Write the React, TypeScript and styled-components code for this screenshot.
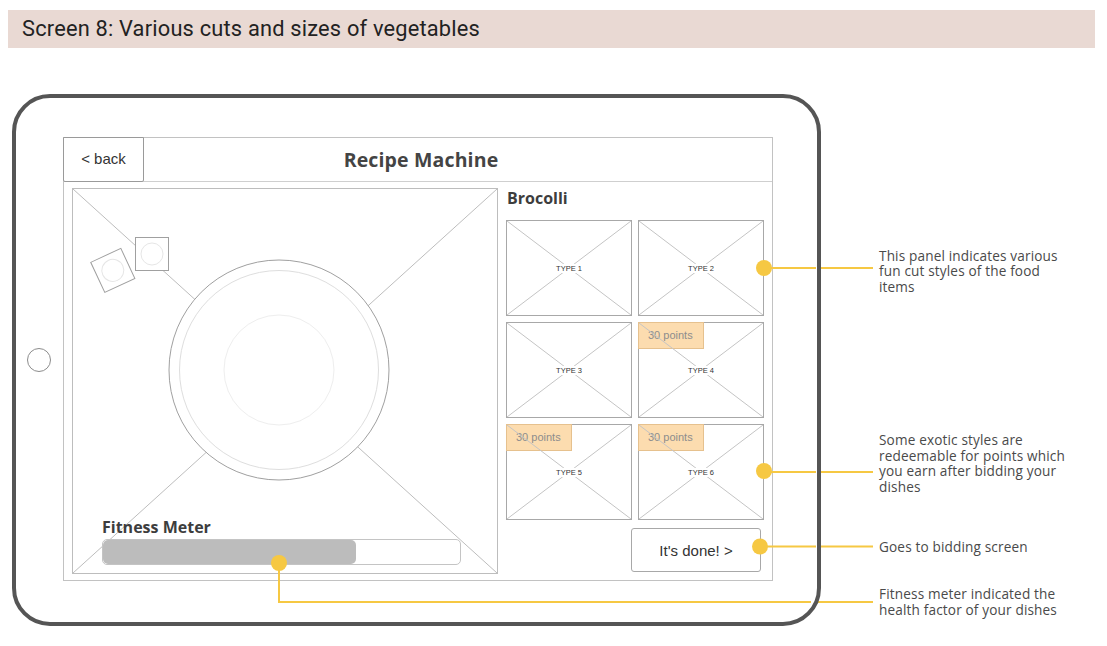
import React from "react";
import styled, { createGlobalStyle } from "styled-components";

const GlobalStyle = createGlobalStyle`
  html, body { margin: 0; padding: 0; background: #ffffff; }
  body { font-family: "Open Sans", "Liberation Sans", sans-serif; color: #444; }
  * { box-sizing: border-box; }
`;

const Page = styled.div`
  position: relative;
  width: 1107px;
  height: 646px;
  overflow: hidden;
`;

const Banner = styled.div`
  margin: 10px 12px 0 8px;
  height: 38px;
  background: #e9d9d3;
  padding-left: 14px;
  font-family: Roboto, "Liberation Sans", sans-serif;
  font-size: 21.8px;
  line-height: 38px;
  letter-spacing: 0.2px;
  color: #222;
`;

const Stage = styled.div`
  display: flex;
  margin-top: 46px;
  padding-left: 12px;
`;

const Tablet = styled.div`
  position: relative;
  z-index: 2;
  width: 809px;
  height: 532px;
  border: 4px solid #555;
  border-radius: 38px;
  display: flex;
  align-items: center;
  gap: 12px;
  padding: 0 0 0 11px;
  flex-shrink: 0;
`;

const HomeButton = styled.div`
  width: 24px;
  height: 24px;
  border: 1.5px solid #8c8c8c;
  border-radius: 50%;
`;

const Screen = styled.div`
  width: 710px;
  height: 444px;
  margin-top: -2px;
  border: 1px solid #c2c2c2;
  display: flex;
  flex-direction: column;
`;

const TopBar = styled.div`
  position: relative;
  height: 44px;
  border-bottom: 1px solid #cfcfcf;
  display: flex;
  align-items: stretch;
  flex-shrink: 0;
`;

const BackButton = styled.div`
  width: 81px;
  margin: -1px 0 -1px -1px;
  border: 1px solid #9a9a9a;
  border-radius: 0 0 2px 2px;
  background: #fff;
  display: flex;
  align-items: center;
  justify-content: center;
  font-family: "Liberation Sans", Arial, sans-serif;
  font-size: 15px;
  color: #333;
  padding-bottom: 2px;
`;

const Title = styled.div`
  position: absolute;
  left: 0;
  right: 0;
  top: 0;
  text-align: center;
  font-weight: 700;
  font-size: 19.5px;
  line-height: 43px;
  letter-spacing: 0.15px;
  color: #444;
  pointer-events: none;
  padding-left: 6px;
`;

const Body = styled.div`
  flex: 1;
  display: flex;
  gap: 8px;
  padding: 6px 8px;
`;

const ImagePanel = styled.div`
  position: relative;
  width: 426px;
  height: 386px;
  border: 1px solid #bdbdbd;
  display: flex;
  flex-direction: column;
  justify-content: flex-end;
  padding: 0 0 8px 29px;
`;

const PanelArt = styled.svg`
  position: absolute;
  inset: 0;
  width: 100%;
  height: 100%;
`;

const Meter = styled.div`
  position: relative;
  display: flex;
  flex-direction: column;
  gap: 3px;
`;

const MeterLabel = styled.div`
  font-weight: 700;
  font-size: 16px;
  line-height: 18px;
  color: #3d3d3d;
`;

const MeterTrack = styled.div`
  width: 359px;
  height: 26px;
  border: 1px solid #c4c4c4;
  border-radius: 5px;
  background: #fff;
  overflow: hidden;
`;

const MeterFill = styled.div`
  height: 100%;
  background: #bcbcbc;
  border-radius: 5px;
`;

const SidePanel = styled.div`
  width: 258px;
  display: flex;
  flex-direction: column;
`;

const ItemTitle = styled.div`
  font-weight: 700;
  font-size: 16px;
  line-height: 20px;
  color: #3d3d3d;
  padding-left: 1px;
`;

const TileGrid = styled.div`
  margin-top: 12px;
  display: grid;
  grid-template-columns: 126px 126px;
  grid-auto-rows: 96px;
  column-gap: 6px;
  row-gap: 6px;
`;

const Tile = styled.div`
  position: relative;
  border: 1px solid #a8a8a8;
  background: #fff;
  display: flex;
  align-items: center;
  justify-content: center;
`;

const TileArt = styled.svg`
  position: absolute;
  inset: 0;
  width: 100%;
  height: 100%;
`;

const TileLabel = styled.span`
  position: relative;
  background: #fff;
  padding: 0 1px;
  font-family: "Liberation Sans", Arial, sans-serif;
  font-size: 7.5px;
  color: #333;
`;

const PointsBadge = styled.div`
  position: absolute;
  top: -1px;
  left: -1px;
  width: 66px;
  height: 27px;
  background: #fcdcaf;
  border: 1px solid #e6c18e;
  padding-left: 9px;
  font-family: "Liberation Sans", Arial, sans-serif;
  font-size: 11px;
  line-height: 25px;
  color: #8d8d8d;
`;

const DoneRow = styled.div`
  display: flex;
  justify-content: flex-end;
  margin-top: 8px;
  padding-right: 3px;
`;

const DoneButton = styled.div`
  width: 130px;
  height: 44px;
  border: 1px solid #a8a8a8;
  border-radius: 3px;
  display: flex;
  align-items: center;
  justify-content: center;
  font-family: "Liberation Sans", Arial, sans-serif;
  font-size: 15px;
  color: #333;
`;

const Notes = styled.div`
  display: flex;
  flex-direction: column;
  margin-left: 58px;
  width: 196px;
`;

const Note = styled.p<{ $gap: number }>`
  margin: ${(p) => p.$gap}px 0 0 0;
  font-size: 13.6px;
  line-height: 15.5px;
  color: #4a4a4a;
  letter-spacing: 0.15px;
`;

const Callouts = styled.svg`
  position: absolute;
  left: 0;
  top: 0;
  width: 1107px;
  height: 646px;
  pointer-events: none;
  z-index: 1;
`;

const CalloutDots = styled.svg`
  position: absolute;
  left: 0;
  top: 0;
  width: 1107px;
  height: 646px;
  pointer-events: none;
  z-index: 3;
`;

const tiles = [
  { label: "TYPE 1", points: false },
  { label: "TYPE 2", points: false },
  { label: "TYPE 3", points: false },
  { label: "TYPE 4", points: true },
  { label: "TYPE 5", points: true },
  { label: "TYPE 6", points: true },
];

const YELLOW = "#f6c843";

export default function App() {
  const fitness = 254 / 359;
  return (
    <Page>
      <GlobalStyle />
      <Banner>Screen 8: Various cuts and sizes of vegetables</Banner>
      <Callouts viewBox="0 0 1107 646">
        <g stroke={YELLOW} strokeWidth="2" fill="none">
          <line x1="820" y1="268" x2="873" y2="268" />
          <line x1="820" y1="472" x2="873" y2="472" />
          <line x1="820" y1="546.5" x2="873" y2="546.5" />
          <line x1="815" y1="602" x2="873" y2="602" />
        </g>
      </Callouts>
      <Stage>
        <Tablet>
          <HomeButton />
          <Screen>
            <TopBar>
              <BackButton>&lt; back</BackButton>
              <Title>Recipe Machine</Title>
            </TopBar>
            <Body>
              <ImagePanel>
                <PanelArt viewBox="0 0 424 384" preserveAspectRatio="none">
                  <line x1="0" y1="0" x2="424" y2="384" stroke="#bdbdbd" strokeWidth="1" />
                  <line x1="424" y1="0" x2="0" y2="384" stroke="#bdbdbd" strokeWidth="1" />
                  <circle cx="206" cy="181" r="110" fill="#fff" stroke="#a0a0a0" strokeWidth="1" />
                  <circle cx="206" cy="181" r="99.5" fill="none" stroke="#dedede" strokeWidth="1" />
                  <circle cx="206" cy="181" r="55" fill="none" stroke="#eeeeee" strokeWidth="1" />
                  <rect x="62.5" y="48.5" width="33" height="33" fill="#fff" stroke="#a0a0a0" strokeWidth="1" />
                  <circle cx="79" cy="65" r="11" fill="none" stroke="#e6e6e6" strokeWidth="1" />
                  <g transform="translate(39.8 81.4) rotate(-25)">
                    <rect x="-16.6" y="-16.6" width="33.2" height="33.2" fill="#fff" stroke="#a0a0a0" strokeWidth="1" />
                    <circle cx="0" cy="0" r="11" fill="none" stroke="#e6e6e6" strokeWidth="1" />
                  </g>
                </PanelArt>
                <Meter>
                  <MeterLabel>Fitness Meter</MeterLabel>
                  <MeterTrack>
                    <MeterFill style={{ width: `${fitness * 100}%` }} />
                  </MeterTrack>
                </Meter>
              </ImagePanel>
              <SidePanel>
                <ItemTitle>Brocolli</ItemTitle>
                <TileGrid>
                  {tiles.map((t) => (
                    <Tile key={t.label}>
                      {t.points && <PointsBadge>30 points</PointsBadge>}
                      <TileArt viewBox="0 0 124 94" preserveAspectRatio="none">
                        <line x1="0" y1="0" x2="124" y2="94" stroke="#c4c4c4" strokeWidth="1" />
                        <line x1="124" y1="0" x2="0" y2="94" stroke="#c4c4c4" strokeWidth="1" />
                      </TileArt>
                      <TileLabel>{t.label}</TileLabel>
                    </Tile>
                  ))}
                </TileGrid>
                <DoneRow>
                  <DoneButton>It's done! &gt;</DoneButton>
                </DoneRow>
              </SidePanel>
            </Body>
          </Screen>
        </Tablet>
        <Notes>
          <Note $gap={153.5}>This panel indicates various fun cut styles of the food items</Note>
          <Note $gap={138}>Some exotic styles are redeemable for points which you earn after bidding your dishes</Note>
          <Note $gap={44.5}>Goes to bidding screen</Note>
          <Note $gap={32}>Fitness meter indicated the health factor of your dishes</Note>
        </Notes>
      </Stage>
      <CalloutDots viewBox="0 0 1107 646">
        <g stroke={YELLOW} strokeWidth="2" fill="none">
          <line x1="764" y1="268" x2="816" y2="268" />
          <line x1="764" y1="472" x2="816" y2="472" />
          <line x1="760" y1="546.5" x2="816" y2="546.5" />
          <polyline points="279,563 279,602 811,602" />
        </g>
        <g fill={YELLOW}>
          <circle cx="764" cy="268" r="8" />
          <circle cx="764" cy="471" r="8" />
          <circle cx="760" cy="546.5" r="8" />
          <circle cx="279" cy="563" r="8" />
        </g>
      </CalloutDots>
    </Page>
  );
}
